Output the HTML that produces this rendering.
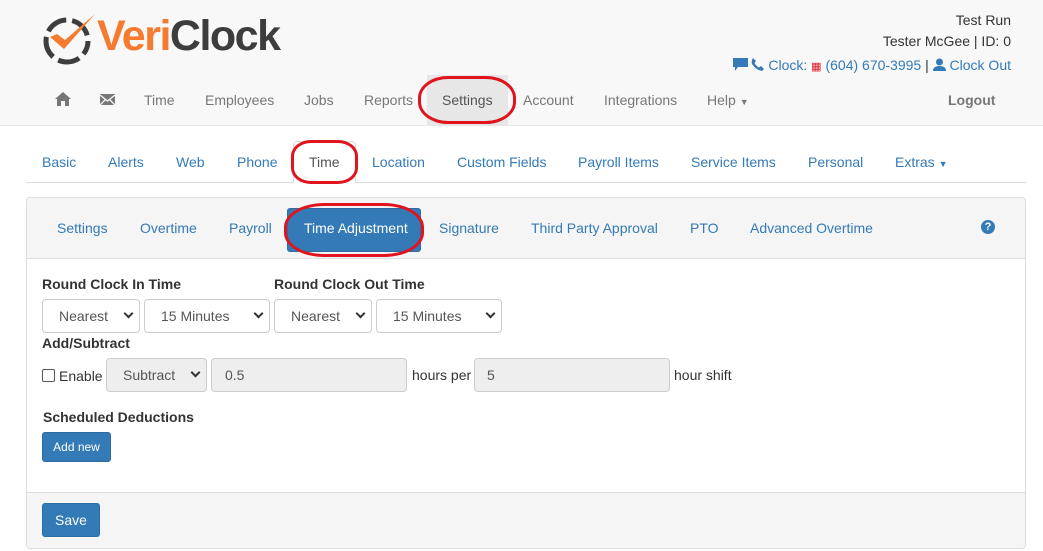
<!DOCTYPE html>
<html><head><meta charset="utf-8"><style>
*{box-sizing:border-box;margin:0;padding:0}
body{width:1043px;height:551px;background:#fff;font-family:"Liberation Sans",Arial,sans-serif;font-size:14px;color:#333;position:relative;overflow:hidden}
.a{position:absolute;white-space:nowrap}
.hdr{position:absolute;left:0;top:0;width:1043px;height:126px;background:#f8f8f8;border-bottom:1px solid #e7e7e7}
.nav{color:#777;top:92px}
.blue{color:#337ab7}
.t2{top:154px;color:#337ab7}
.t3{top:220px;color:#337ab7}
.sel{position:absolute;height:34px;border:1px solid #ccc;border-radius:4px;background:#fff;color:#555;font-size:14px;line-height:32px}
.sel span{position:absolute;top:0}
.sel i{position:absolute;top:12px;width:7px;height:7px;border-right:2px solid #333;border-bottom:2px solid #333;transform:rotate(45deg)}
.ring{position:absolute;border:3.5px solid #e0141e}
.btn{position:absolute;background:#337ab7;border:1px solid #2e6da4;border-radius:3px;color:#fff}
b{font-weight:bold}
</style></head><body>
<div class="hdr"></div>
<!-- logo -->
<svg class="a" style="left:40px;top:10px" width="60" height="58" viewBox="0 0 60 58">
<circle cx="27" cy="31" r="21" fill="none" stroke="#3d3d3d" stroke-width="5" stroke-dasharray="22 6" stroke-dashoffset="8"/>
<path d="M10 27 L24 39 L55 4 L25 30 L17 24 Z" fill="#f47b30"/>
</svg>
<div class="a" style="left:97px;top:12px;font-size:43px;font-weight:bold;letter-spacing:-1.5px"><span style="color:#f47b30">Veri</span><span style="color:#3d3d3d">Clock</span></div>
<div class="a" style="right:32px;top:12px">Test Run</div>
<div class="a" style="right:32px;top:33px">Tester McGee | ID: 0</div>
<div class="a blue" style="right:32px;top:57px"><svg width="15" height="13" viewBox="0 0 15 13" style="vertical-align:-1px"><path d="M0 0 H15 V9 H5 L2 13 L2 9 H0 Z" fill="#337ab7"/></svg> <svg width="13" height="13" viewBox="0 0 13 13" style="vertical-align:-1px"><path d="M2 0 L5 3 L3.5 5 Q5 8 8 9.5 L10 8 L13 11 L11 13 Q5 12 1 6 Q0 3 2 0 Z" fill="#337ab7"/></svg> Clock: <span style="color:#e0141e;font-size:11px">&#9638;</span> (604) 670-3995 <span style="color:#333">|</span> <svg width="13" height="13" viewBox="0 0 13 13" style="vertical-align:-1px"><circle cx="6.5" cy="4" r="3.5" fill="#337ab7"/><path d="M0 13 Q0 8 6.5 8 Q13 8 13 13 Z" fill="#337ab7"/></svg> Clock Out</div>
<!-- nav -->
<div style="position:absolute;left:427px;top:75px;width:81px;height:51px;background:#e7e7e7"></div>
<svg class="a" style="left:55px;top:92px" width="16" height="14" viewBox="0 0 16 14"><path d="M8 0 L16 7 L14 7 L14 14 L10 14 L10 9 L6 9 L6 14 L2 14 L2 7 L0 7 Z" fill="#777"/></svg>
<svg class="a" style="left:100px;top:94px" width="15" height="11" viewBox="0 0 15 11"><path d="M0 0 H15 V11 H0 Z" fill="#777"/><path d="M0 1 L7.5 7 L15 1 M0 11 L5.5 5.5 M15 11 L9.5 5.5" stroke="#f8f8f8" stroke-width="1.3" fill="none"/></svg>
<div class="a nav" style="left:144px">Time</div>
<div class="a nav" style="left:205px">Employees</div>
<div class="a nav" style="left:304px">Jobs</div>
<div class="a nav" style="left:364px">Reports</div>
<div class="a nav" style="left:442px;color:#555">Settings</div>
<div class="a nav" style="left:523px">Account</div>
<div class="a nav" style="left:604px">Integrations</div>
<div class="a nav" style="left:707px">Help <span style="font-size:9px">&#9660;</span></div>
<div class="a nav" style="left:948px;font-weight:bold">Logout</div>
<div class="ring" style="left:418px;top:76px;width:98px;height:48px;border-radius:30px/22px"></div>
<!-- tabs -->
<div style="position:absolute;left:26px;top:182px;width:1000px;height:1px;background:#ddd"></div>
<div style="position:absolute;left:293px;top:141px;width:63px;height:42px;background:#fff;border:1px solid #ddd;border-bottom-color:#fff;border-radius:4px 4px 0 0"></div>
<div class="a t2" style="left:42px">Basic</div>
<div class="a t2" style="left:108px">Alerts</div>
<div class="a t2" style="left:176px">Web</div>
<div class="a t2" style="left:237px">Phone</div>
<div class="a t2" style="left:309px;color:#555">Time</div>
<div class="a t2" style="left:372px">Location</div>
<div class="a t2" style="left:457px">Custom Fields</div>
<div class="a t2" style="left:578px">Payroll Items</div>
<div class="a t2" style="left:691px">Service Items</div>
<div class="a t2" style="left:808px">Personal</div>
<div class="a t2" style="left:895px">Extras <span style="font-size:9px">&#9660;</span></div>
<div class="ring" style="left:291px;top:140px;width:67px;height:44px;border-radius:20px/16px"></div>
<!-- panel -->
<div style="position:absolute;left:26px;top:197px;width:1000px;height:352px;border:1px solid #ddd;border-radius:4px;overflow:hidden">
<div style="position:absolute;left:0;top:0;width:100%;height:61px;background:#f5f5f5;border-bottom:1px solid #ddd"></div>
<div style="position:absolute;left:0;top:294px;width:100%;height:60px;background:#f5f5f5;border-top:1px solid #ddd"></div>
</div>
<div class="btn" style="left:287px;top:208px;width:134px;height:44px"></div>
<div class="a t3" style="left:57px">Settings</div>
<div class="a t3" style="left:140px">Overtime</div>
<div class="a t3" style="left:229px">Payroll</div>
<div class="a t3" style="left:304px;color:#fff">Time Adjustment</div>
<div class="a t3" style="left:439px">Signature</div>
<div class="a t3" style="left:531px">Third Party Approval</div>
<div class="a t3" style="left:690px">PTO</div>
<div class="a t3" style="left:750px">Advanced Overtime</div>
<div class="a" style="left:981px;top:220px;width:14px;height:14px;border-radius:50%;background:#337ab7;color:#fff;font-size:11px;font-weight:bold;text-align:center;line-height:14px">?</div>
<div class="ring" style="left:284px;top:203px;width:140px;height:54px;border-radius:40px/24px"></div>
<!-- form -->
<div class="a" style="left:42px;top:276px"><b>Round Clock In Time</b></div>
<div class="a" style="left:274px;top:276px"><b>Round Clock Out Time</b></div>
<div class="sel" style="left:42px;top:299px;width:98px"><span style="left:16px">Nearest</span><i style="left:82px;top:10px"></i></div>
<div class="sel" style="left:144px;top:299px;width:126px"><span style="left:16px">15 Minutes</span><i style="left:110px;top:10px"></i></div>
<div class="sel" style="left:274px;top:299px;width:98px"><span style="left:16px">Nearest</span><i style="left:82px;top:10px"></i></div>
<div class="sel" style="left:376px;top:299px;width:126px"><span style="left:16px">15 Minutes</span><i style="left:110px;top:10px"></i></div>
<div class="a" style="left:42px;top:335px"><b>Add/Subtract</b></div>
<div class="a" style="left:42px;top:369px;width:13px;height:13px;border:1px solid #555;border-radius:2px;background:#fff"></div>
<div class="a" style="left:59px;top:368px">Enable</div>
<div class="sel" style="left:106px;top:358px;width:101px;background:#eee"><span style="left:16px">Subtract</span><i style="left:85px;top:10px"></i></div>
<div class="sel" style="left:211px;top:358px;width:196px;background:#eee"><span style="left:13px">0.5</span></div>
<div class="a" style="left:412px;top:367px">hours per</div>
<div class="sel" style="left:474px;top:358px;width:196px;background:#eee"><span style="left:12px">5</span></div>
<div class="a" style="left:674px;top:367px">hour shift</div>
<div class="a" style="left:43px;top:409px"><b>Scheduled Deductions</b></div>
<div class="btn" style="left:42px;top:432px;width:69px;height:30px;font-size:12px;line-height:28px;text-align:center">Add new</div>
<div class="btn" style="left:42px;top:503px;width:58px;height:34px;line-height:32px;text-align:center">Save</div>
</body></html>
